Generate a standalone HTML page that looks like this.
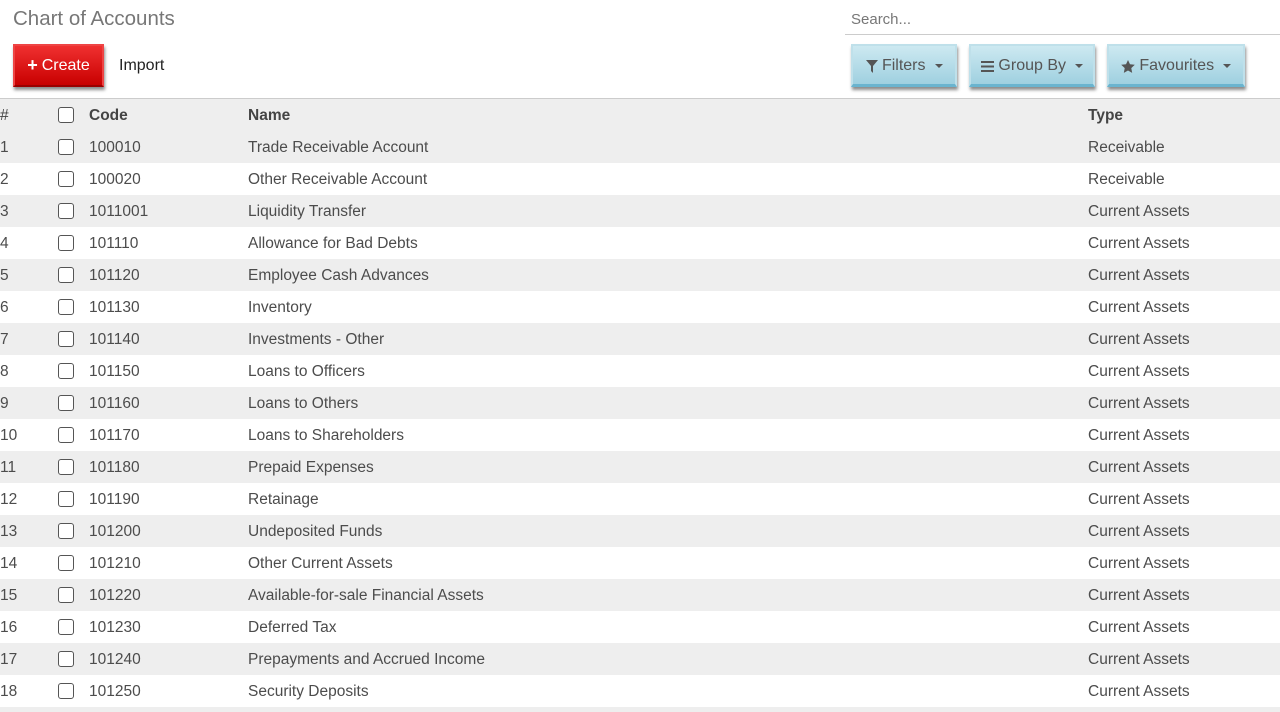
<!DOCTYPE html><html><head><style>
html,body{margin:0;width:1280px;height:712px;overflow:hidden}
body{background:#fff;font-family:"Liberation Sans",sans-serif;color:#4c4c4c;position:relative}
.t{position:absolute;left:13px;top:7px;font-size:20.5px;color:#777}
.search{position:absolute;left:845px;top:0;width:435px;height:34px;border-bottom:1px solid #ccc}
.search span{position:absolute;left:6px;top:11px;font-size:15px;color:#777}
.btn{position:absolute;top:44px;height:43px;box-sizing:border-box;font-size:16px;display:flex;align-items:center;justify-content:center;box-shadow:1px 3px 3px rgba(0,0,0,.45)}
.cr{left:13px;width:91px;background:linear-gradient(#f03030,#c80000);color:#fff;border:2px solid #e44;border-bottom-color:#900}
.bl{background:linear-gradient(#cde9f1,#9fd0e0);color:#555;border:2px solid #bfe0ea;border-bottom:3px solid #6ab4cf;padding-top:2px}
.car{display:inline-block;border-left:4px solid transparent;border-right:4px solid transparent;border-top:4px solid #555;margin-left:9px}
.imp{position:absolute;left:119px;top:57px;font-size:16px;color:#222}
.hdr{position:absolute;left:0;top:98px;width:1280px;height:1px;background:#ccc}
.r{position:absolute;left:0;width:1280px;height:32px;font-size:15.5px}
.r div{position:absolute;top:8px;white-space:nowrap}
.g{background:#eee}
.cb{position:absolute;left:58px;top:8px!important;width:14px;height:14px;border:1px solid #555;border-radius:3px;background:#fff}
</style></head><body>
<div class="t">Chart of Accounts</div>
<div class="search"><span>Search...</span></div>
<div class="btn cr"><b style="font-size:18px;margin-right:4px">+</b>Create</div>
<div class="imp">Import</div>
<div class="btn bl" style="left:851px;width:106px"><svg width="12" height="13" viewBox="0 0 12 13"><path d="M0 0H12L7 6V13L5 11V6Z" fill="#555"/></svg>&nbsp;Filters<span class="car"></span></div>
<div class="btn bl" style="left:969px;width:126px"><svg width="13" height="11" viewBox="0 0 13 11"><path d="M0 0h13v2H0zM0 4.5h13v2H0zM0 9h13v2H0z" fill="#555"/></svg>&nbsp;Group By<span class="car"></span></div>
<div class="btn bl" style="left:1107px;width:138px"><svg width="14" height="13" viewBox="0 0 24 23"><path d="M12 0l3.5 7.5 8.5 1-6.2 5.8 1.6 8.4L12 18.6 4.6 22.7l1.6-8.4L0 8.5l8.5-1z" fill="#555"/></svg>&nbsp;Favourites<span class="car"></span></div>
<div class="hdr"></div>
<div class="r g" style="top:99px;font-weight:bold;color:#444"><div style="left:0;font-weight:normal">#</div><div class="cb"></div><div style="left:89px">Code</div><div style="left:248px">Name</div><div style="left:1088px">Type</div></div>
<div class="r g" style="top:131px"><div style="left:0">1</div><div class="cb"></div><div style="left:89px">100010</div><div style="left:248px">Trade Receivable Account</div><div style="left:1088px">Receivable</div></div>
<div class="r" style="top:163px"><div style="left:0">2</div><div class="cb"></div><div style="left:89px">100020</div><div style="left:248px">Other Receivable Account</div><div style="left:1088px">Receivable</div></div>
<div class="r g" style="top:195px"><div style="left:0">3</div><div class="cb"></div><div style="left:89px">1011001</div><div style="left:248px">Liquidity Transfer</div><div style="left:1088px">Current Assets</div></div>
<div class="r" style="top:227px"><div style="left:0">4</div><div class="cb"></div><div style="left:89px">101110</div><div style="left:248px">Allowance for Bad Debts</div><div style="left:1088px">Current Assets</div></div>
<div class="r g" style="top:259px"><div style="left:0">5</div><div class="cb"></div><div style="left:89px">101120</div><div style="left:248px">Employee Cash Advances</div><div style="left:1088px">Current Assets</div></div>
<div class="r" style="top:291px"><div style="left:0">6</div><div class="cb"></div><div style="left:89px">101130</div><div style="left:248px">Inventory</div><div style="left:1088px">Current Assets</div></div>
<div class="r g" style="top:323px"><div style="left:0">7</div><div class="cb"></div><div style="left:89px">101140</div><div style="left:248px">Investments - Other</div><div style="left:1088px">Current Assets</div></div>
<div class="r" style="top:355px"><div style="left:0">8</div><div class="cb"></div><div style="left:89px">101150</div><div style="left:248px">Loans to Officers</div><div style="left:1088px">Current Assets</div></div>
<div class="r g" style="top:387px"><div style="left:0">9</div><div class="cb"></div><div style="left:89px">101160</div><div style="left:248px">Loans to Others</div><div style="left:1088px">Current Assets</div></div>
<div class="r" style="top:419px"><div style="left:0">10</div><div class="cb"></div><div style="left:89px">101170</div><div style="left:248px">Loans to Shareholders</div><div style="left:1088px">Current Assets</div></div>
<div class="r g" style="top:451px"><div style="left:0">11</div><div class="cb"></div><div style="left:89px">101180</div><div style="left:248px">Prepaid Expenses</div><div style="left:1088px">Current Assets</div></div>
<div class="r" style="top:483px"><div style="left:0">12</div><div class="cb"></div><div style="left:89px">101190</div><div style="left:248px">Retainage</div><div style="left:1088px">Current Assets</div></div>
<div class="r g" style="top:515px"><div style="left:0">13</div><div class="cb"></div><div style="left:89px">101200</div><div style="left:248px">Undeposited Funds</div><div style="left:1088px">Current Assets</div></div>
<div class="r" style="top:547px"><div style="left:0">14</div><div class="cb"></div><div style="left:89px">101210</div><div style="left:248px">Other Current Assets</div><div style="left:1088px">Current Assets</div></div>
<div class="r g" style="top:579px"><div style="left:0">15</div><div class="cb"></div><div style="left:89px">101220</div><div style="left:248px">Available-for-sale Financial Assets</div><div style="left:1088px">Current Assets</div></div>
<div class="r" style="top:611px"><div style="left:0">16</div><div class="cb"></div><div style="left:89px">101230</div><div style="left:248px">Deferred Tax</div><div style="left:1088px">Current Assets</div></div>
<div class="r g" style="top:643px"><div style="left:0">17</div><div class="cb"></div><div style="left:89px">101240</div><div style="left:248px">Prepayments and Accrued Income</div><div style="left:1088px">Current Assets</div></div>
<div class="r" style="top:675px"><div style="left:0">18</div><div class="cb"></div><div style="left:89px">101250</div><div style="left:248px">Security Deposits</div><div style="left:1088px">Current Assets</div></div>
<div class="r g" style="top:707px;height:5px"></div>
</body></html>
